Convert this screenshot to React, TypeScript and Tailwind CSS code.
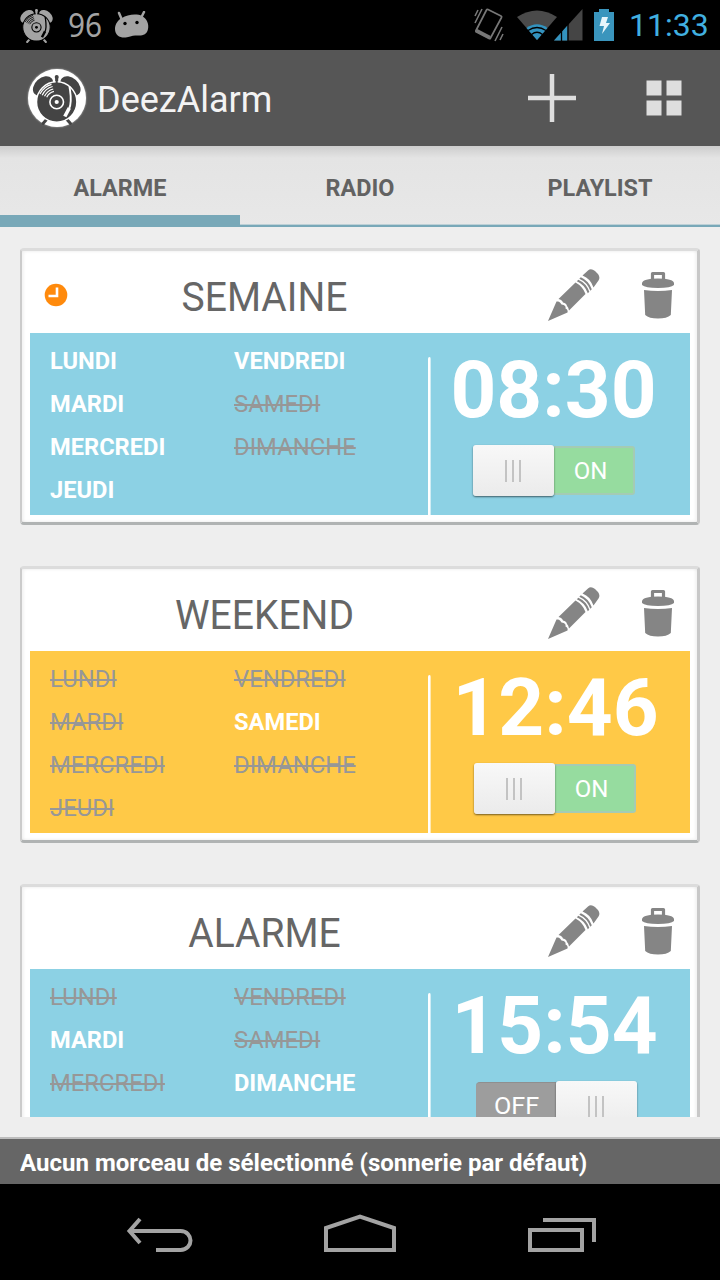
import React from "react";

type Day = { label: string; on: boolean };
type Alarm = {
  title: string;
  time: string;
  panel: string;
  next?: boolean;
  active: number[];
  on: boolean;
  timePad: string;
  switchPad: string;
};

const DAYS = ["LUNDI", "MARDI", "MERCREDI", "JEUDI", "VENDREDI", "SAMEDI", "DIMANCHE"];

const ALARMS: Alarm[] = [
  { title: "SEMAINE", time: "08:30", panel: "bg-[#8cd1e4]", next: true, active: [0, 1, 2, 3, 4], on: true, timePad: "pr-[14px]", switchPad: "pr-[14px]" },
  { title: "WEEKEND", time: "12:46", panel: "bg-[#ffc947]", active: [5], on: true, timePad: "pr-[10px]", switchPad: "pr-[12px]" },
  { title: "ALARME", time: "15:54", panel: "bg-[#8cd1e4]", active: [1, 6], on: false, timePad: "pr-[12px]", switchPad: "pr-[9px]" },
];

function AlarmDisc({ color, ink, viewBox, className }: { color: string; ink: string; viewBox: string; className: string }) {
  return (
    <svg viewBox={viewBox} className={className} fill="none">
      <ellipse cx="15" cy="17" rx="11.500" ry="8" transform="rotate(-42 15 17)" fill={color} />
      <ellipse cx="42.500" cy="17" rx="11.500" ry="8" transform="rotate(42 42.500 17)" fill={color} />
      <path d="M28.700 8v5M19 50l-4 4.500M38.500 50l4 4.500" stroke={color} strokeWidth="3" strokeLinecap="round" />
      <circle cx="28.700" cy="33" r="20.200" fill={color} stroke={ink} strokeWidth="1.500" />
      <path d="M28.700 9v6" stroke={color} strokeWidth="2" />
      <circle cx="28.700" cy="8" r="2" fill={color} />
      <circle cx="28.700" cy="33" r="6.800" stroke={ink} strokeWidth="1.600" />
      <circle cx="28.700" cy="33" r="2.100" fill={ink} />
      <path
        d="M18.700 28.300A11 11 0 0 1 25.900 22.400M16.500 27.300A13.500 13.500 0 0 1 25.200 20M14.200 26.200A16 16 0 0 1 24.600 17.500M12 25A18.500 18.500 0 0 1 23.500 15.300"
        stroke={ink}
        strokeWidth="1.200"
      />
      <path d="M41.500 17.500C42.500 25 44.500 33 41 40" stroke={ink} strokeWidth="1.900" />
      <path d="M41.300 39 36.800 47.500" stroke={ink} strokeWidth="3.600" />
    </svg>
  );
}

function StatusBar() {
  return (
    <header className="flex h-[50px] shrink-0 items-center bg-black pl-[19px] pr-[12px]">
      <AlarmDisc color="#a3a3a3" ink="#000000" viewBox="4 4.500 49.500 51.500" className="h-[35px] w-[35px]" />
      <span className="ml-[14px] w-[35px] whitespace-nowrap text-[33px] leading-[50px] text-[#a3a3a3]">
        <span className="inline-block origin-left scale-x-[0.9] font-['Noto_Sans']">96</span>
      </span>
      <svg viewBox="0 0 36 28" className="ml-[11px] h-[28px] w-[36px]">
        <path d="M5 2l3 7M30 1l-3 6" stroke="#a3a3a3" strokeWidth="2.500" strokeLinecap="round" />
        <path d="M8 7C13 3.500 23 2.500 28 5c5 3 7 8 6 13-1 6-6 7-11 6.500-5-.5-6 1-10 1.800C7 27.500 1 25 1 18 1 13 4 9 8 7z" fill="#a3a3a3" />
        <circle cx="11" cy="12.500" r="1.700" />
        <circle cx="23" cy="11.500" r="1.700" />
      </svg>
      <svg viewBox="0 0 32 36" className="ml-auto h-[36px] w-[32px]" fill="none" stroke="#777777">
        <path d="M15 2.500 28 9q1 .5.500 1.500L17.500 31q-.5 1-1.500.500L3.500 25q-1-.5-.5-1.500L13.500 3q.5-1 1.500-.5z" strokeWidth="1.700" />
        <path d="M3.500 23.500 17 30.500" strokeWidth="3.500" />
        <path d="M2 16 9 2M2 9l3-6M22 34l7-14M27 33l3-6" strokeWidth="1.600" />
      </svg>
      <svg viewBox="0 0 66 34" className="ml-[12px] h-[34px] w-[66px]">
        <path d="M0 9Q20-4 40 9L20 32z" fill="#4a4a4a" />
        <path d="M9.500 20Q20 12.500 30.500 20L20 32z" fill="#3393bf" />
        <path d="M11 22.500Q20 16.500 29 22.500M14.500 26.500Q20 22 25.500 26.500" fill="none" stroke="#000" strokeWidth="1.300" />
        <path d="M37 32.500 65.500 1v31.500z" fill="#454545" />
        <path d="M37 32.500 50.500 17.500v15z" fill="#3393bf" />
        <path d="M44.500 22v11M51 15v18" stroke="#000" strokeWidth="1.300" />
      </svg>
      <svg viewBox="0 0 20 32" className="ml-[11px] h-[32px] w-[20px]">
        <path d="M5 0h10v3h5v29H0V3h5z" fill="#3a95bd" />
        <path d="M8 8h6l-2 6h4L8 25l2-8H5.500z" fill="#e8f5fb" />
      </svg>
      <span className="ml-[15px] w-[79px] whitespace-nowrap text-[32px] leading-[52px] text-[#41b0e0]">11:33</span>
    </header>
  );
}

function ActionBar() {
  return (
    <div className="flex h-[96px] shrink-0 items-center bg-[#565656] pl-[28px] pr-[38px]">
      <div className="h-[58px] w-[58px] rounded-full bg-white shadow-[0_0_2px_rgba(255,255,255,0.7)]">
        <AlarmDisc color="#444444" ink="#ffffff" viewBox="0 0 58 58" className="h-[58px] w-[58px]" />
      </div>
      <h1 className="ml-[11px] mt-[3px] whitespace-nowrap text-[36px] leading-[42px] text-[#f3f3f3]">DeezAlarm</h1>
      <svg viewBox="0 0 48 48" className="ml-auto h-[48px] w-[48px]">
        <path d="M24 0v48M0 24h48" stroke="#dedede" strokeWidth="4.500" />
      </svg>
      <svg viewBox="0 0 36 36" className="ml-[70px] h-[36px] w-[36px]" fill="#dedede">
        <path d="M.5.5h15v15h-15zM20.500.5h15v15h-15zM.5 20.500h15v15h-15zM20.500 20.500h15v15h-15z" />
      </svg>
    </div>
  );
}

function Tabs() {
  const tabs = ["ALARME", "RADIO", "PLAYLIST"];
  return (
    <nav className="flex h-[81px] shrink-0 flex-col bg-linear-to-b from-[#cdcdcd] via-[#e4e4e4] via-15% to-[#e8e8e8]">
      <div className="grid h-[69px] grid-cols-3 text-center text-[24px] font-bold leading-[85px] text-[#626262]">
        {tabs.map((t) => (
          <span key={t} className="h-[69px] scale-x-[0.975]">
            {t}
          </span>
        ))}
      </div>
      <div className="flex h-[12px] items-end">
        <i className="h-[12px] w-[240px] bg-[#78a8b8]" />
        <i className="h-[3px] flex-1 border-t border-[#bdd0d6] bg-[#78a8b8]" />
      </div>
    </nav>
  );
}

function DayColumn({ days }: { days: Day[] }) {
  return (
    <ul className="w-[184px] text-[24px] leading-[43px]">
      {days.map((d) => (
        <li
          key={d.label}
          className={
            d.on
              ? "h-[43px] origin-left scale-x-[0.985] whitespace-nowrap font-bold text-white"
              : "h-[43px] origin-left scale-x-[0.993] whitespace-nowrap text-[#979797] line-through decoration-[1.5px]"
          }
        >
          {d.label}
        </li>
      ))}
    </ul>
  );
}

function Thumb() {
  return (
    <div className="z-10 flex h-[51px] w-[81px] items-center justify-center gap-[5px] rounded-[3px] bg-linear-to-b from-[#f8f8f8] to-[#ebebeb] shadow-[0_1px_2px_rgba(0,0,0,0.55)]">
      <i className="h-[22px] w-[2px] bg-[#c3c3c3]" />
      <i className="h-[22px] w-[2px] bg-[#c3c3c3]" />
      <i className="h-[22px] w-[2px] bg-[#c3c3c3]" />
    </div>
  );
}

function Switch({ on }: { on: boolean }) {
  return on ? (
    <div className="flex items-center">
      <Thumb />
      <div className="h-[49px] w-[81px] rounded-r-[3px] border-2 border-l-0 border-[#a4cbb4] bg-[#96dc9f] pr-[5px] text-center text-[24px] leading-[46px] text-white">
        ON
      </div>
    </div>
  ) : (
    <div className="flex items-center">
      <div className="h-[49px] w-[80px] rounded-l-[4px] border-t border-[#8f8f8f] bg-[#9d9d9d] pl-[3px] text-center text-[24px] leading-[47px] text-white">
        <span className="inline-block scale-x-[1.05]">OFF</span>
      </div>
      <Thumb />
    </div>
  );
}

function AlarmCard({ alarm }: { alarm: Alarm }) {
  const days = DAYS.map((label, i) => ({ label, on: alarm.active.includes(i) }));
  return (
    <article className="h-[277px] w-[680px] shrink-0 rounded-[4px] border-b-[3px] border-l-2 border-r-[3px] border-t-[3px] border-b-[#b0b3b3] border-l-[#cbcbcb] border-r-[#c8c8c8] border-t-[#dcdcdc] bg-white pl-[8px] shadow-[inset_-2px_-1px_3px_rgba(0,0,0,0.05),inset_2px_1px_3px_rgba(0,0,0,0.05)]">
      <div className="flex h-[82px] items-center pl-[14px]">
        <div className="h-[24px] w-[24px]">
          {alarm.next && (
            <svg viewBox="0 0 24 24" className="mt-[3px] h-[24px] w-[24px]">
              <circle cx="12" cy="12" r="11.300" fill="#ff8a0c" />
              <path d="M13 4.500V13H4.500" fill="none" stroke="#fff" strokeWidth="2.600" />
            </svg>
          )}
        </div>
        <h2 className="mt-[12px] w-[393px] scale-x-[0.975] text-center text-[40px] leading-[48px] text-[#666666]">{alarm.title}</h2>
        <svg viewBox="0 0 54 54" className="ml-[86px] mt-[5px] h-[54px] w-[54px]">
          <path d="M1 53 9.500 33.500C12 33.500 13 34 14.500 36.500 18 37 19 38.500 18.500 40.500 20.500 41.500 21 43 20.500 44.500z" fill="#858585" />
          <path d="M11.500 31 28.500 14.500Q36 18.500 38.500 26L22 42.500Q21.500 39 20 38 19.500 35 16 34.500 15 31.500 11.500 31z" fill="#858585" />
          <path d="M30 12.500Q38 16 41 24.500L39.500 26Q36.500 17.500 28.500 14z" fill="#858585" transform="translate(1.300 -.8)" />
          <path d="M33 9.500Q41 13 44 21.500L42.500 23Q39.500 14.500 31.500 11z" fill="#858585" transform="translate(.8 -.2)" />
          <path d="M35.500 7.500 41 2.500Q44 0 48 3L51 6Q53.500 9.500 51.500 12.500L46.500 19.500Q43.500 10.500 35.500 7.500z" fill="#858585" />
        </svg>
        <svg viewBox="0 0 32 48" className="ml-[41px] mt-[5px] h-[48px] w-[32px]">
          <path d="M10.500 9V2.500h11V9" fill="none" stroke="#858585" strokeWidth="3.200" strokeLinejoin="round" />
          <path d="M0 12Q1 7.500 16 7.500T32 12v2Q29 17 16 17T0 14z" fill="#858585" />
          <path d="M2 19q14 2 28 0L28.800 44Q25 47.500 16 47.500T3.200 44z" fill="#858585" />
        </svg>
      </div>
      <div className={`flex h-[182px] w-[660px] ${alarm.panel}`}>
        <div className="flex w-[398px] pl-[20px] pt-[7px]">
          <DayColumn days={days.slice(0, 4)} />
          <DayColumn days={days.slice(4)} />
        </div>
        <div className="mt-[24px] w-[3px] rounded-t-full bg-linear-to-r from-white via-white to-white/40" />
        <div className="flex-1 text-center">
          <div className={`mt-[11px] h-[90px] whitespace-nowrap text-[80px] font-bold leading-[93px] text-white ${alarm.timePad}`}>{alarm.time}</div>
          <div className={`mt-[11px] flex justify-center ${alarm.switchPad}`}>
            <Switch on={alarm.on} />
          </div>
        </div>
      </div>
    </article>
  );
}

function NavBar() {
  return (
    <div className="flex h-[96px] shrink-0 items-start bg-black pl-[126px] pt-[29px]">
      <svg viewBox="0 0 68 40" className="h-[40px] w-[68px]" fill="none" stroke="#a3a3a3" strokeWidth="4">
        <path d="M3 18h51.500c6.500 0 10 5 10 9.500s-3.500 9.500-10 9.500H30" />
        <path d="M14 6 3.500 18 14 30" />
      </svg>
      <svg viewBox="0 0 72 40" className="ml-[130px] h-[40px] w-[72px]" fill="none" stroke="#a3a3a3" strokeWidth="4">
        <path d="M2 37V15L36 3.500 70 15v22z" />
      </svg>
      <svg viewBox="0 0 68 40" className="ml-[132px] h-[40px] w-[68px]" fill="none" stroke="#a3a3a3" strokeWidth="4">
        <path d="M2 17h52v20H2zM15 7h51v22" />
      </svg>
    </div>
  );
}

export default function App() {
  return (
    <div className="flex h-[1280px] w-[720px] flex-col overflow-hidden bg-[#eeeeee] font-['Roboto',sans-serif]">
      <StatusBar />
      <ActionBar />
      <Tabs />
      <main className="flex h-[890px] shrink-0 flex-col gap-[41px] overflow-hidden px-[20px] pt-[21px]">
        {ALARMS.map((a) => (
          <AlarmCard key={a.title} alarm={a} />
        ))}
      </main>
      <footer className="mt-[20px] h-[47px] shrink-0 border-t-2 border-[#bdbdbd] bg-[#666666] pl-[20px] text-[24px] font-bold leading-[49px] text-white">
        <span className="inline-block origin-left scale-x-[1.002] whitespace-nowrap">Aucun morceau de sélectionné (sonnerie par défaut)</span>
      </footer>
      <NavBar />
    </div>
  );
}
